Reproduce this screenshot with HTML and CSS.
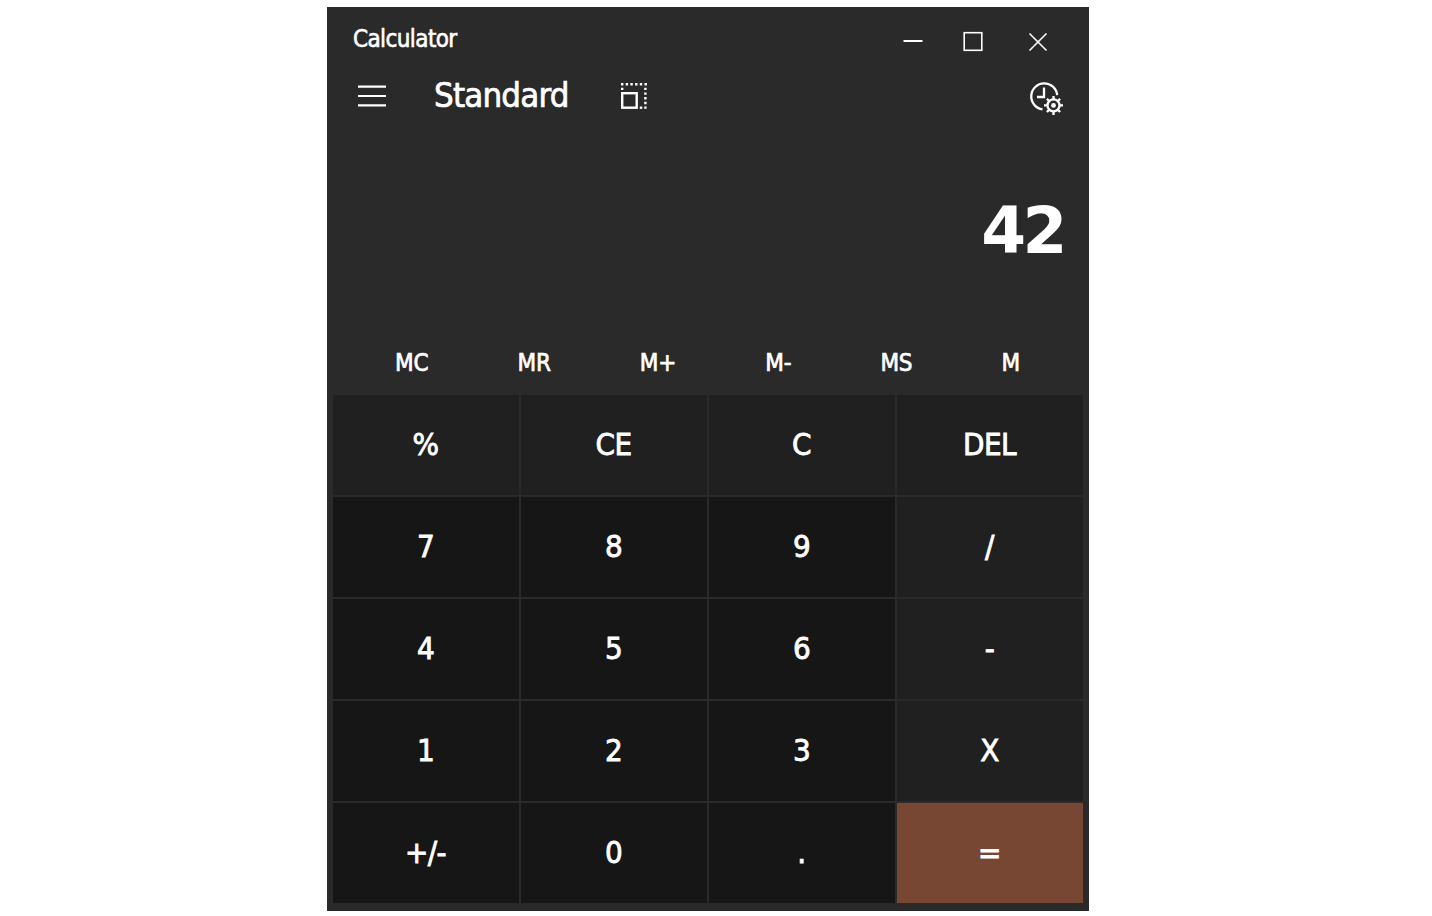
FILE: index.html
```html
<!DOCTYPE html>
<html lang="en">
<head>
<meta charset="utf-8">
<title>Calculator</title>
<link rel="stylesheet" href="styles.css">
</head>
<body>
<main class="window">
  <header class="titlebar">
    <span class="title">Calculator</span>
    <svg class="controls" width="146" height="22" viewBox="0 0 146 22">
      <path class="thick" d="M.5 10h19"/>
      <rect class="thin" x="61.2" y="1.7" width="17.6" height="17.6"/>
      <path class="thin" d="M126.5 2.5l17 17M143.500 2.500l-17 17"/>
    </svg>
  </header>
  <nav class="modebar">
    <svg class="menu" width="28" height="22" viewBox="0 0 28 22"><path d="M0 1.600h28M0 11h28M0 20.300h28"/></svg>
    <h1 class="mode">Standard</h1>
    <svg class="pin" width="28" height="28" viewBox="0 0 28 28">
      <rect class="pin-box" x="2.200" y="11.200" width="14.500" height="14.500"/>
      <path class="pin-dots" d="M1 2.300h26.500M1 6.900h2.500M25.400 5.700v21"/>
      <path class="pin-dot" d="M19.800 25.700h2.500"/>
    </svg>
    <svg class="history" width="36" height="36" viewBox="0 0 36 36">
      <path class="clock" d="M13.500 27.300A13 13 0 1 1 28.200 13.200"/>
      <path class="clock" d="M15 5.500v9.500H8"/>
      <circle class="gear" cx="24.500" cy="23.400" r="6"/>
      <path class="gear" d="M24.500 17.500v-3.600M24.500 29.300v3.600M18.600 23.400h-3.600M30.400 23.400h3.600M20.300 19.200l-2.400-2.400M28.700 27.600l2.400 2.400M28.700 19.200l2.400-2.400M20.300 27.600l-2.400 2.400"/>
      <circle class="hub" cx="24.500" cy="23.400" r="2.400"/>
    </svg>
  </nav>
  <output class="display">42</output>
  <div class="memory">
    <span>MC</span><span>MR</span><span>M+</span><span>M-</span><span>MS</span><span>M</span>
  </div>
  <section class="keys">
    <button class="key fn">%</button><button class="key fn">CE</button><button class="key fn">C</button><button class="key fn">DEL</button>
    <button class="key">7</button><button class="key">8</button><button class="key">9</button><button class="key fn">/</button>
    <button class="key">4</button><button class="key">5</button><button class="key">6</button><button class="key fn">-</button>
    <button class="key">1</button><button class="key">2</button><button class="key">3</button><button class="key fn">X</button>
    <button class="key">+/-</button><button class="key">0</button><button class="key">.</button><button class="key equals">=</button>
  </section>
</main>
</body>
</html>
```
FILE: styles.css
```css
* { box-sizing: border-box; }
body {
  margin: 0;
  padding-top: 7px;
  height: 916px;
  overflow: hidden;
  background: #fff;
  font-family: Tahoma, "DejaVu Sans Condensed", "DejaVu Sans", sans-serif;
  font-stretch: condensed;
}
.window {
  width: 762px;
  height: 904px;
  margin-left: 327px;
  background: #2a2a2a;
  color: #fff;
  display: flex;
  flex-direction: column;
}
svg { display: block; fill: none; stroke: #fff; flex: none; }
.titlebar {
  height: 62px;
  padding: 0 40px 0 26px;
  display: flex;
  justify-content: space-between;
}
.title {
  padding-top: 18px;
  font-size: 24px;
  line-height: 29px;
  letter-spacing: -.6px;
  -webkit-text-stroke: .6px #fff;
}
.controls { margin-top: 24px; }
.thick { stroke-width: 2; }
.thin { stroke-width: 1.6; }
.modebar {
  height: 56px;
  padding: 0 24px 0 31px;
  display: flex;
}
.menu { margin-top: 16px; stroke-width: 2.2; }
.mode {
  width: 184px;
  margin: 5px 0 0 48px;
  font-size: 34.5px;
  line-height: 42px;
  font-weight: 400;
  letter-spacing: -.8px;
  -webkit-text-stroke: .7px #fff;
}
.pin { margin: 13px 0 0 2px; }
.pin-box { stroke-width: 2.4; }
.pin-dots { stroke-width: 2.4; stroke-dasharray: 2.4 2.3; }
.pin-dot { stroke-width: 2.4; }
.history { margin: 13px 0 0 auto; }
.clock { stroke-width: 2.3; }
.gear { stroke-width: 2.3; }
.hub { fill: #fff; stroke: none; }
.display {
  height: 205px;
  padding: 67px 25px 0 0;
  text-align: right;
  font-family: "DejaVu Sans", sans-serif;
  font-stretch: normal;
  font-size: 64.5px;
  line-height: 78px;
  font-weight: 700;
  letter-spacing: -3.5px;
}
.memory {
  height: 65px;
  padding: 19px 69px 0 68px;
  display: flex;
  justify-content: space-between;
  font-size: 24px;
  line-height: 29px;
  letter-spacing: -.2px;
  -webkit-text-stroke: .7px #fff;
}
.keys {
  margin: 0 6px;
  display: grid;
  grid-template-columns: repeat(4, 186px);
  grid-auto-rows: 100px;
  gap: 2px;
}
.key {
  margin: 0;
  padding: 0 1px 2px 0;
  border: 0;
  background: #161616;
  color: #fff;
  font: inherit;
  font-size: 31px;
  letter-spacing: -.6px;
  -webkit-text-stroke: .8px #fff;
}
.fn { background: #202020; }
.equals { background: #784733; }
```
